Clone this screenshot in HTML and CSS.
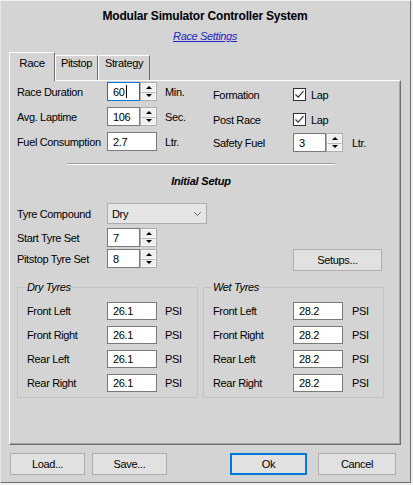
FILE: index.html
```html
<!DOCTYPE html>
<html>
<head>
<meta charset="utf-8">
<link rel="stylesheet" href="styles.css">
</head>
<body>
<div class="win">
  <div class="title">Modular Simulator Controller System</div>
  <div class="sub"><span class="link">Race Settings</span></div>
  <div class="tabs">
    <div class="tab active">Race</div>
    <div class="tab t2">Pitstop</div>
    <div class="tab t3">Strategy</div>
  </div>
  <div class="panel">
    <div class="top">
      <div class="lcol">
        <div class="row">
          <span class="lbl">Race Duration</span>
          <div class="num"><div class="box focus">60<i class="caret"></i></div><div class="spin"><span class="up"></span><span class="dn"></span></div></div>
          <span class="unit">Min.</span>
        </div>
        <div class="row">
          <span class="lbl">Avg. Laptime</span>
          <div class="num"><div class="box">106</div><div class="spin"><span class="up"></span><span class="dn"></span></div></div>
          <span class="unit">Sec.</span>
        </div>
        <div class="row">
          <span class="lbl">Fuel Consumption</span>
          <div class="box field">2.7</div>
          <span class="unit">Ltr.</span>
        </div>
      </div>
      <div class="rcol">
        <div class="row">
          <span class="lbl">Formation</span>
          <span class="chk"><svg width="11" height="11" viewBox="0 0 11 11"><path d="M1.5 5.5 L4.2 8.2 L9.5 2.2" fill="none" stroke="#333" stroke-width="1.2"/></svg></span>
          <span>Lap</span>
        </div>
        <div class="row">
          <span class="lbl">Post Race</span>
          <span class="chk"><svg width="11" height="11" viewBox="0 0 11 11"><path d="M1.5 5.5 L4.2 8.2 L9.5 2.2" fill="none" stroke="#333" stroke-width="1.2"/></svg></span>
          <span>Lap</span>
        </div>
        <div class="row r3">
          <span class="lbl">Safety Fuel</span>
          <div class="num"><div class="box">3</div><div class="spin"><span class="up"></span><span class="dn"></span></div></div>
          <span class="unit u2">Ltr.</span>
        </div>
      </div>
    </div>
    <div class="sep"></div>
    <div class="heading">Initial Setup</div>
    <div class="setup">
      <div class="row sel-row">
        <span class="lbl">Tyre Compound</span>
        <div class="select"><span>Dry</span><svg width="7" height="4" viewBox="0 0 7 4"><path d="M0.3 0.3 L3.5 3.5 L6.7 0.3" fill="none" stroke="#555" stroke-width="0.9"/></svg></div>
      </div>
      <div class="row start-row">
        <span class="lbl">Start Tyre Set</span>
        <div class="num"><div class="box">7</div><div class="spin"><span class="up"></span><span class="dn"></span></div></div>
      </div>
      <div class="row pit-row">
        <span class="lbl">Pitstop Tyre Set</span>
        <div class="num"><div class="box">8</div><div class="spin"><span class="up"></span><span class="dn"></span></div></div>
        <div class="btn setups">Setups...</div>
      </div>
    </div>
    <div class="groups">
      <fieldset class="grp">
        <legend>Dry Tyres</legend>
        <div class="grow"><span class="glbl">Front Left</span><div class="box field">26.1</div><span class="unit">PSI</span></div>
        <div class="grow"><span class="glbl">Front Right</span><div class="box field">26.1</div><span class="unit">PSI</span></div>
        <div class="grow"><span class="glbl">Rear Left</span><div class="box field">26.1</div><span class="unit">PSI</span></div>
        <div class="grow"><span class="glbl">Rear Right</span><div class="box field">26.1</div><span class="unit">PSI</span></div>
      </fieldset>
      <fieldset class="grp">
        <legend>Wet Tyres</legend>
        <div class="grow"><span class="glbl">Front Left</span><div class="box field">28.2</div><span class="unit u2">PSI</span></div>
        <div class="grow"><span class="glbl">Front Right</span><div class="box field">28.2</div><span class="unit u2">PSI</span></div>
        <div class="grow"><span class="glbl">Rear Left</span><div class="box field">28.2</div><span class="unit u2">PSI</span></div>
        <div class="grow"><span class="glbl">Rear Right</span><div class="box field">28.2</div><span class="unit u2">PSI</span></div>
      </fieldset>
    </div>
  </div>
  <div class="buttons">
    <div class="btn load">Load...</div>
    <div class="btn save">Save...</div>
    <div class="btn ok">Ok</div>
    <div class="btn cancel">Cancel</div>
  </div>
</div>
</body>
</html>
```
FILE: styles.css
```css
* { box-sizing: border-box; }
body {
  margin: 0;
  background: #f0f0f0;
  font-family: "Liberation Sans", Arial, sans-serif;
  font-size: 11px;
  letter-spacing: -0.35px;
  color: #000;
}
.win {
  width: 411px;
  height: 483px;
  background: #d4d4d4;
  border-top: 1px solid #f2f2f2;
  border-left: 1px solid #e6e6e6;
  border-right: 1px solid #6d6d6d;
  border-bottom: 1px solid #6d6d6d;
  padding: 0 9px 0 8px;
  display: flex;
  flex-direction: column;
}
.title {
  margin-top: 8px;
  line-height: 14px;
  font-size: 12px;
  font-weight: bold;
  letter-spacing: -0.2px;
  text-align: center;
}
.sub {
  margin-top: 6px;
  line-height: 14px;
  text-align: center;
}
.link {
  color: #2424c8;
  font-style: italic;
  text-decoration: underline;
}
.tabs {
  margin-top: 9px;
  height: 28px;
  display: flex;
  align-items: flex-end;
  position: relative;
  z-index: 1;
}
.tab {
  height: 25px;
  line-height: 14px;
  text-align: center;
  background: #d4d4d4;
  border-top: 1px solid #fff;
  border-left: 1px solid #fff;
  border-right: 1px solid #6d6d6d;
}
.tab.active {
  width: 46px;
  height: 29px;
  margin-bottom: -1px;
  padding-top: 3px;
  font-size: 11.5px;
}
.t2 { width: 43px; }
.t3 { width: 52px; }
.panel {
  height: 365px;
  background: #d4d4d4;
  border-top: 1px solid #fff;
  border-left: 1px solid #fff;
  border-right: 1px solid #6d6d6d;
  border-bottom: 1px solid #6d6d6d;
  box-shadow: inset -1px -1px 0 #a5a5a5;
  padding: 1px 0 0 7px;
  display: flex;
  flex-direction: column;
}
.top { display: flex; }
.lcol {
  width: 196px;
  display: flex;
  flex-direction: column;
  gap: 6px;
}
.rcol {
  display: flex;
  flex-direction: column;
  gap: 6px;
  padding-top: 3px;
}
.row {
  display: flex;
  align-items: center;
  height: 19px;
}
.r3 { margin-top: -2px; }
.lbl { width: 90px; white-space: nowrap; }
.rcol .lbl { width: 80px; }
.unit { margin-left: 8px; }
.u2 { margin-left: 9px; }
.num {
  display: flex;
  width: 50px;
  height: 19px;
}
.box {
  background: #fff;
  border: 1px solid #7a7a7a;
  height: 19px;
  padding-left: 5px;
  display: flex;
  align-items: center;
}
.num .box { width: 33px; }
.box.focus { border-color: #0078d7; }
.field { width: 50px; }
.caret {
  display: inline-block;
  width: 1px;
  height: 13px;
  background: #000;
  margin-left: 1px;
}
.spin {
  width: 17px;
  height: 19px;
  border: 1px solid #acacac;
  background: #ececec;
  display: flex;
  flex-direction: column;
}
.spin span {
  flex: 1;
  display: flex;
  align-items: center;
  justify-content: center;
  background: #efefef;
  border: 1px solid #fafafa;
}
.spin span + span { border-top: 1px solid #b5b5b5; }
.up::before {
  content: "";
  border-left: 3px solid transparent;
  border-right: 3px solid transparent;
  border-bottom: 3px solid #000;
}
.dn::before {
  content: "";
  border-left: 3px solid transparent;
  border-right: 3px solid transparent;
  border-top: 3px solid #000;
}
.chk {
  width: 13px;
  height: 13px;
  border: 1px solid #333;
  background: #fff;
  margin-right: 5px;
  display: flex;
}
.sep {
  margin: 11px 0 0 50px;
  width: 268px;
  height: 2px;
  border-top: 1px solid #a0a0a0;
  border-bottom: 1px solid #fff;
}
.heading {
  margin: 9px 0 0 50px;
  width: 268px;
  line-height: 14px;
  text-align: center;
  font-weight: bold;
  font-style: italic;
  letter-spacing: -0.2px;
}
.setup {
  margin-top: 15px;
  display: flex;
  flex-direction: column;
}
.sel-row { height: 21px; }
.start-row { margin-top: 4px; }
.pit-row { margin-top: 2px; }
.select {
  width: 100px;
  height: 21px;
  background: #e5e5e5;
  border: 1px solid #acacac;
  padding: 0 5px 0 4px;
  display: flex;
  align-items: center;
  justify-content: space-between;
}
.btn {
  height: 22px;
  background: #e1e1e1;
  border: 1px solid #adadad;
  display: flex;
  align-items: center;
  justify-content: center;
}
.setups {
  width: 89px;
  margin-left: 136px;
  align-self: flex-start;
}
.groups {
  margin-top: 12px;
  display: flex;
  gap: 5px;
}
.grp {
  width: 181px;
  margin: 0;
  min-width: 0;
  padding: 8px 0 5px 9px;
  border: 1px solid #c4c4c4;
  display: flex;
  flex-direction: column;
  gap: 6px;
}
.grp legend {
  padding: 0;
  line-height: 14px;
  font-style: italic;
}
.grow {
  display: flex;
  align-items: center;
  height: 18px;
}
.grow .box { height: 18px; }
.glbl { width: 80px; }
.buttons {
  margin-top: 8px;
  display: flex;
}
.load { width: 75px; margin-left: 1px; }
.save { width: 75px; margin-left: 7px; }
.ok { width: 77px; margin-left: 63px; border: 2px solid #0078d7; }
.cancel { width: 78px; margin-left: 11px; }
```
